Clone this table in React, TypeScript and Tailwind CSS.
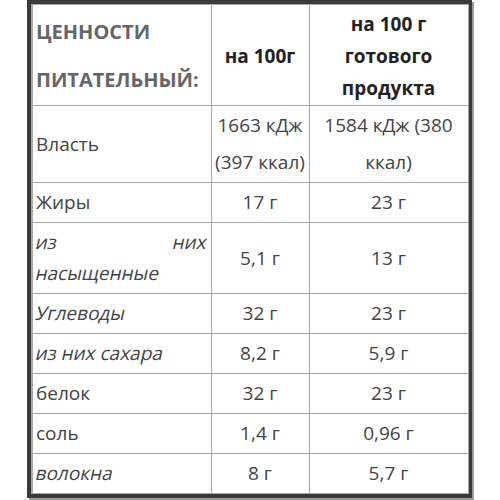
const rows: { name: string; italic?: boolean; justify?: boolean; a: string; b: string; h: string }[] = [
  { name: "Власть", a: "1663 кДж (397 ккал)", b: "1584 кДж (380 ккал)", h: "h-[77px]" },
  { name: "Жиры", a: "17 г", b: "23 г", h: "h-[40px]" },
  { name: "из них насыщенные", italic: true, justify: true, a: "5,1 г", b: "13 г", h: "h-[71px]" },
  { name: "Углеводы", italic: true, a: "32 г", b: "23 г", h: "h-[40px]" },
  { name: "из них сахара", italic: true, a: "8,2 г", b: "5,9 г", h: "h-[40px]" },
  { name: "белок", a: "32 г", b: "23 г", h: "h-[40px]" },
  { name: "соль", a: "1,4 г", b: "0,96 г", h: "h-[40px]" },
  { name: "волокна", italic: true, a: "8 г", b: "5,7 г", h: "h-[40px]" },
];

// the source page slants regular glyphs (no italic face), so skew word by word
function Slanted({ text }: { text: string }) {
  const words = text.split(" ");
  return (
    <>
      {words.map((w, i) => (
        <span key={i}>
          <span className="inline-block -skew-x-[13deg]">{w}</span>
          {i < words.length - 1 ? " " : ""}
        </span>
      ))}
    </>
  );
}

export default function App() {
  return (
    <div className="min-h-[500px] bg-white font-['Open_Sans',sans-serif]">
      <div className="ml-[27px] w-[445px] border-4 border-[#3a3a3a] shadow-[2px_2px_0_#9a9a9a]">
        <table className="w-[437px] table-fixed border-collapse border border-l-2 border-[#a8a8a8]">
          <colgroup>
            <col className="w-[179px]" />
            <col className="w-[98px]" />
            <col className="w-[159px]" />
          </colgroup>
          <thead>
            <tr className="h-[101px]">
              <th className="border border-[#a8a8a8] px-[3px] pt-[2px] text-left align-middle text-[20px] font-bold uppercase leading-[48px] text-[#666]">
                Ценности питательный:
              </th>
              <th className="border border-[#a8a8a8] px-[3px] pt-[2px] text-center text-[19px] font-bold leading-[32px] text-[#222]">
                на 100г
              </th>
              <th className="border border-[#a8a8a8] px-[3px] pt-[2px] text-center text-[19px] font-bold leading-[32px] text-[#222]">
                на 100 г готового продукта
              </th>
            </tr>
          </thead>
          <tbody className="text-[19px] leading-[37px] text-[#444]">
            {rows.map((r) => (
              <tr key={r.name} className={r.h}>
                <td
                  className={`border border-[#a8a8a8] px-[3px] align-middle ${
                    r.justify ? "text-justify leading-[31px]" : "text-left"
                  }`}
                >
                  {r.italic ? <Slanted text={r.name} /> : r.name}
                </td>
                <td className="border border-[#a8a8a8] px-[2px] text-center align-middle">{r.a}</td>
                <td className="border border-[#a8a8a8] px-[2px] text-center align-middle">{r.b}</td>
              </tr>
            ))}
          </tbody>
        </table>
      </div>
    </div>
  );
}
